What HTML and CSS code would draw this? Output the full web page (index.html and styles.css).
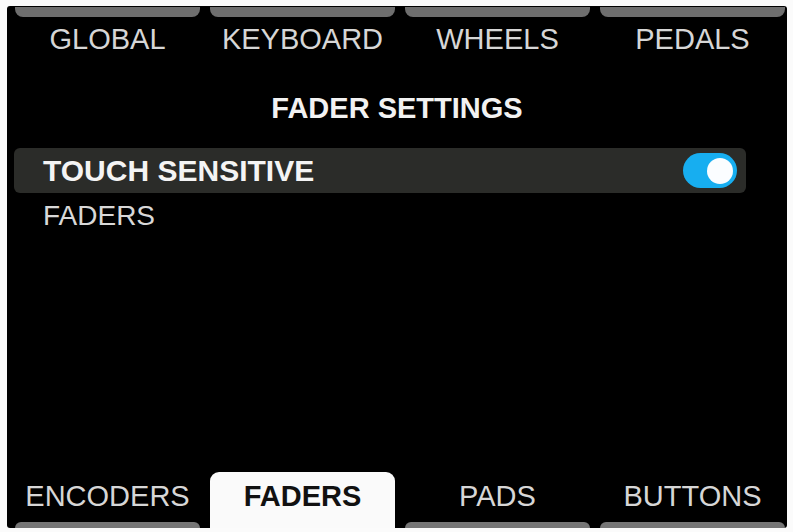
FILE: index.html
```html
<!DOCTYPE html>
<html lang="en">
<head>
    <meta charset="UTF-8">
    <meta name="viewport" content="width=device-width, initial-scale=1.0">
    <title>Fader Settings</title>
    <link rel="stylesheet" href="styles.css">
</head>
<body>
    <div class="screen">
        <!-- Top page tabs -->
        <div class="tabs top-tabs">
            <div class="tab"><div class="tab-cap"></div><span class="tab-label">GLOBAL</span></div>
            <div class="tab"><div class="tab-cap"></div><span class="tab-label">KEYBOARD</span></div>
            <div class="tab"><div class="tab-cap"></div><span class="tab-label">WHEELS</span></div>
            <div class="tab"><div class="tab-cap"></div><span class="tab-label">PEDALS</span></div>
        </div>

        <h1 class="title">FADER SETTINGS</h1>

        <!-- Settings list -->
        <div class="setting-list">
            <div class="setting selected">
                <span class="setting-name">TOUCH SENSITIVE</span>
                <div class="toggle on"><div class="toggle-knob"></div></div>
            </div>
            <div class="setting">
                <span class="setting-name">FADERS</span>
            </div>
        </div>

        <!-- Bottom page tabs -->
        <div class="tabs bottom-tabs">
            <div class="tab"><span class="tab-label">ENCODERS</span><div class="tab-base"></div></div>
            <div class="tab active"><span class="tab-label">FADERS</span><div class="tab-base"></div></div>
            <div class="tab"><span class="tab-label">PADS</span><div class="tab-base"></div></div>
            <div class="tab"><span class="tab-label">BUTTONS</span><div class="tab-base"></div></div>
        </div>
    </div>
</body>
</html>
```

FILE: styles.css
```css
* {
    margin: 0;
    padding: 0;
    box-sizing: border-box;
}

body {
    background-color: #fbfbfb;
    font-family: "Liberation Sans", Arial, sans-serif;
    overflow: hidden;
}

.screen {
    margin: 6px 6px 0 7px;
    width: 780px;
    height: 522px;
    background-color: #000;
    display: flex;
    flex-direction: column;
    border-radius: 3px;
}

.tabs {
    display: grid;
    grid-template-columns: repeat(4, 185px);
    column-gap: 10px;
    padding: 0 2px 0 8px;
}

.top-tabs {
    padding-top: 1px;
}

.tab {
    display: flex;
    flex-direction: column;
    align-items: center;
}

.tab-cap {
    width: 100%;
    height: 10px;
    background-color: #6e6e6e;
    border-radius: 0 0 8px 8px;
}

.tab-label {
    font-size: 29px;
    line-height: 29px;
    color: #d6d6d6;
}

.top-tabs .tab-label {
    margin-top: 8px;
}

.title {
    margin-top: 40px;
    text-align: center;
    font-size: 29px;
    line-height: 29px;
    font-weight: bold;
    color: #f2f2f2;
}

.setting-list {
    flex: 1;
    margin-top: 25px;
    padding-left: 7px;
    padding-right: 41px;
}

.setting {
    display: flex;
    align-items: center;
    justify-content: space-between;
    padding-left: 29px;
}

.setting-name {
    font-size: 28px;
    line-height: 28px;
    color: #d8d8d8;
}

.setting + .setting {
    margin-top: 9px;
}

.setting.selected {
    height: 45px;
    padding-right: 9px;
    background-color: #2b2c29;
    border-radius: 6px;
}

.setting.selected .setting-name {
    font-size: 30px;
    line-height: 30px;
    font-weight: bold;
    color: #f4f4f4;
}

.toggle {
    width: 54px;
    height: 35px;
    border-radius: 18px;
    background-color: #555;
    display: flex;
    align-items: center;
    padding: 0 4px;
}

.toggle.on {
    background-color: #17aef0;
    justify-content: flex-end;
}

.toggle-knob {
    width: 26px;
    height: 26px;
    border-radius: 50%;
    background-color: #fbfdff;
}

.bottom-tabs {
    align-items: end;
}

.bottom-tabs .tab {
    height: 56px;
    padding-top: 10px;
    justify-content: space-between;
}

.tab-base {
    width: 100%;
    height: 6px;
    background-color: #767676;
    border-radius: 6px 6px 0 0;
}

.tab.active {
    background-color: #fafafa;
    border-radius: 9px 9px 0 0;
}

.tab.active .tab-label {
    font-weight: bold;
    color: #111;
}

.tab.active .tab-base {
    visibility: hidden;
}
```
